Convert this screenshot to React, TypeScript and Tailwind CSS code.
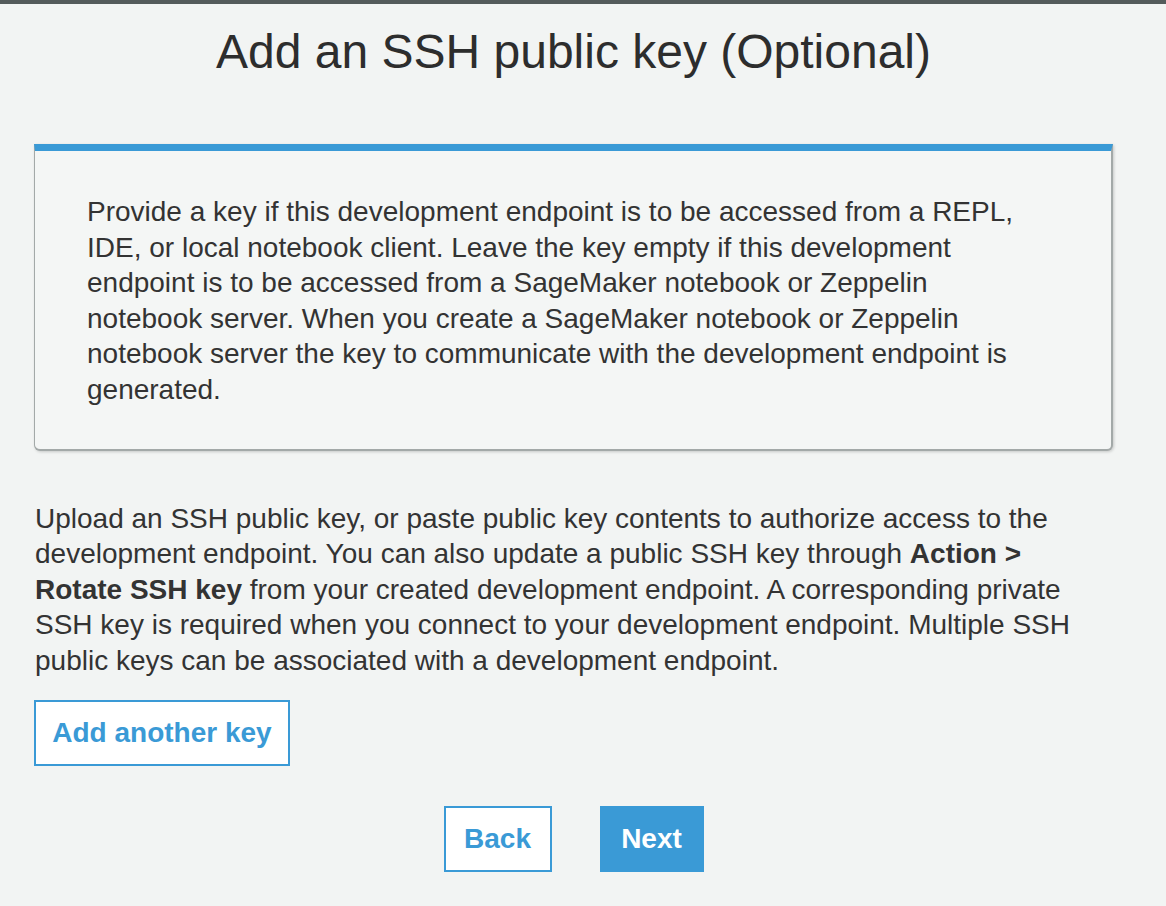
import React from "react";

export default function App() {
  return (
    <div
      className="min-h-[906px] w-[1166px] bg-[#f2f4f3] text-[#333333]"
      style={{ fontFamily: '"Liberation Sans", Arial, sans-serif' }}
    >
      <div className="h-[4px] bg-[#545b5b]" />
      <div className="ml-[34px] w-[1079px]">
        <h1 className="mt-[20px] text-center text-[48px] leading-[56px] font-normal text-[#2d2d2d]">
          Add an SSH public key (Optional)
        </h1>
        <div className="mt-[64px] rounded-b-[6px] border-t-[7px] border-t-[#3a9ad6] border-l border-r-2 border-b-2 border-l-[#a3a9a8] border-r-[#a3a9a8] border-b-[#a3a9a8] bg-[#f4f6f5] px-[52px] pt-[43px] pb-[41px] shadow-[1px_1px_3px_rgba(0,0,0,0.18)]">
          <p className="text-[28px] leading-[35.6px]">
            Provide a key if this development endpoint is to be accessed from a REPL,
            <br />
            IDE, or local notebook client. Leave the key empty if this development
            <br />
            endpoint is to be accessed from a SageMaker notebook or Zeppelin
            <br />
            notebook server. When you create a SageMaker notebook or Zeppelin
            <br />
            notebook server the key to communicate with the development endpoint is
            <br />
            generated.
          </p>
        </div>
        <p className="mt-[50px] pl-[1px] text-[28px] leading-[35.6px]">
          Upload an SSH public key, or paste public key contents to authorize access to the
          <br />
          development endpoint. You can also update a public SSH key through <b>Action &gt;</b>
          <br />
          <b>Rotate SSH key</b> from your created development endpoint. A corresponding private
          <br />
          SSH key is required when you connect to your development endpoint. Multiple SSH
          <br />
          public keys can be associated with a development endpoint.
        </p>
        <button className="mt-[21px] flex h-[66px] w-[256px] items-center justify-center border-2 border-[#3a9ad6] bg-white text-[28px] font-bold text-[#3a9ad6]">
          Add another key
        </button>
        <div className="mt-[40px] flex justify-center gap-[48px]">
          <button className="flex h-[66px] w-[108px] items-center justify-center border-2 border-[#3a9ad6] bg-white text-[28px] font-bold text-[#3a9ad6]">
            Back
          </button>
          <button className="flex h-[66px] w-[104px] items-center justify-center border-2 border-[#3a9ad6] bg-[#3a9ad6] text-[28px] font-bold text-white">
            Next
          </button>
        </div>
      </div>
    </div>
  );
}
